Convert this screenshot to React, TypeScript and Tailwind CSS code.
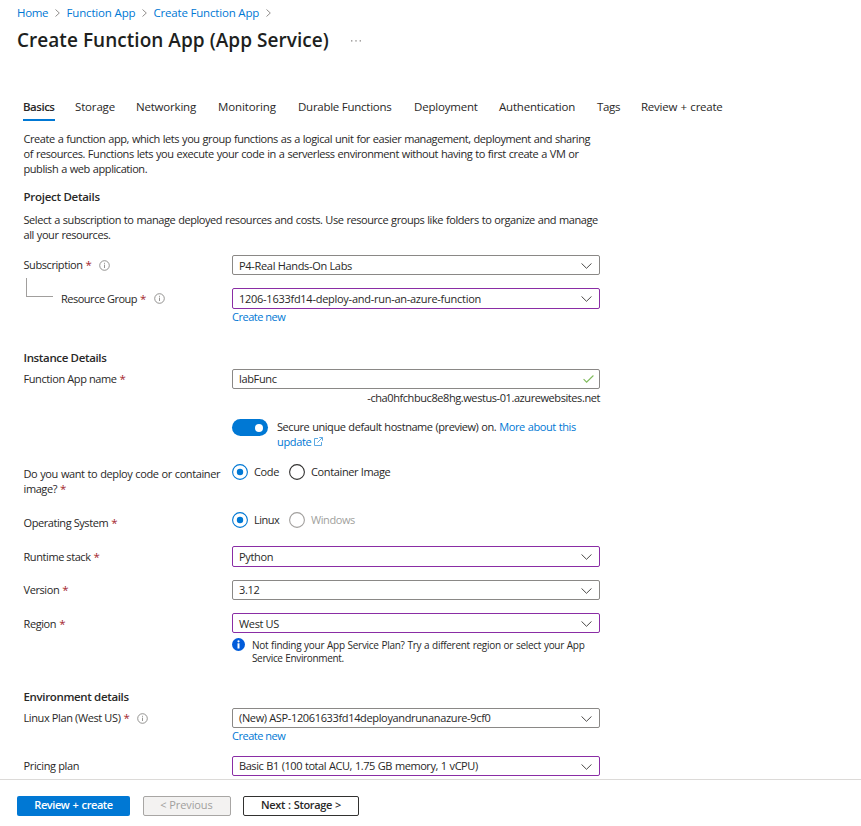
import type { ReactNode } from "react";

const BLUE = "text-[#0078d4]";

function Star() {
  return <span className="ml-[3px] text-[11.5px] text-[#a4262c]">*</span>;
}

function Info() {
  return (
    <svg className="ml-[7.5px] mt-[2px] size-[11px] shrink-0" viewBox="0 0 11 11" fill="none" stroke="#7a7876">
      <circle cx="5.5" cy="5.5" r="4.8" strokeWidth="0.8" />
      <path d="M5.5 4.6v3.4M5.5 2.8v1" strokeWidth="0.8" />
    </svg>
  );
}

function Chevron() {
  return (
    <svg className="mt-px h-[6px] w-[11px] shrink-0" viewBox="0 0 11 6" fill="none" stroke="#4a4846" strokeWidth="1">
      <path d="M0.5 0.4l5 4.9l5-4.9" />
    </svg>
  );
}

function Crumb() {
  return (
    <svg className="mt-px h-[8px] w-[5px] shrink-0" viewBox="0 0 5 8" fill="none" stroke="#85827f" strokeWidth="0.9">
      <path d="M0.5 0.5l3.8 3.5l-3.8 3.5" />
    </svg>
  );
}

function Select({ purple, tall, low, children }: { purple?: boolean; tall?: boolean; low?: boolean; children: ReactNode }) {
  return (
    <div
      className={`flex w-[368px] items-center justify-between rounded-[2px] border bg-white pr-[7px] pl-[6px] ${
        tall ? "h-[21px]" : "h-[20px]"
      } ${purple ? "border-[#8a2da5]" : "border-[#8a8886]"}`}
    >
      <span className={`leading-[15px] ${low ? "mt-px" : "-mt-px"}`}>{children}</span>
      <Chevron />
    </div>
  );
}

function Radio({ checked, disabled }: { checked?: boolean; disabled?: boolean }) {
  return (
    <svg className="size-[16px] shrink-0" viewBox="0 0 16 16" fill="none">
      <circle
        cx="8"
        cy="8"
        r="7.4"
        stroke={checked ? "#0078d4" : disabled ? "#a19f9d" : "#323130"}
        strokeWidth="1.1"
      />
      {checked && <circle cx="8" cy="8" r="3.2" fill="#0078d4" />}
    </svg>
  );
}

function Label({ children }: { children: ReactNode }) {
  return <div className="flex w-[208.5px] shrink-0">{children}</div>;
}

export default function App() {
  return (
    <div className="flex h-[826px] w-[861px] flex-col overflow-hidden bg-white font-['Open_Sans','Noto_Sans',sans-serif] text-[11px] leading-[15px] tracking-[-0.35px] whitespace-nowrap text-[#292827]">
      <nav className={`flex h-[25px] items-center pl-[17px] text-[11.5px] ${BLUE}`}>
        <span className="w-[38px] tracking-[-0.35px]">Home</span>
        <Crumb />
        <span className="ml-[6.5px] w-[75px] tracking-[-0.16px]">Function App</span>
        <Crumb />
        <span className="ml-[7px] w-[112px] tracking-[-0.19px]">Create Function App</span>
        <Crumb />
      </nav>
      <header className="flex h-[30px] items-center pl-[17px]">
        <h1 className="w-[334px] text-[19px] leading-[28px] font-semibold tracking-[0.04px] text-[#201f1e]">
          Create Function App (App Service)
        </h1>
        <svg className="mt-[2px] h-[2px] w-[10px]" viewBox="0 0 10 2" fill="#8a8886">
          <path d="M0 .2h1.4v1.4H0zM4.3 .2h1.4v1.4H4.3zM8.6 .2H10v1.4H8.6z" />
        </svg>
      </header>

      <div className="mt-[42px] flex h-[24px] pl-[23px] text-[11.5px] leading-[20px] tracking-[-0.2px]">
        <div className="mr-[20px] w-[32px] border-b-2 border-[#0078d4] font-semibold tracking-[-0.48px]">Basics</div>
        <div className="w-[61px] tracking-[-0.16px]">Storage</div>
        <div className="w-[82px]">Networking</div>
        <div className="w-[80px] tracking-[-0.13px]">Monitoring</div>
        <div className="w-[116px] tracking-[-0.26px]">Durable Functions</div>
        <div className="w-[85px]">Deployment</div>
        <div className="w-[98px]">Authentication</div>
        <div className="w-[44px] tracking-[-0.35px]">Tags</div>
        <div className="tracking-[-0.25px] [word-spacing:0.75px]">Review + create</div>
      </div>

      <main className="flex h-[658px] shrink-0 flex-col overflow-hidden pl-[23.5px]">
        <p className="mt-[10px] tracking-[-0.43px] [word-spacing:0.5px]">
          Create a function app, which lets you group functions as a logical unit for easier management, deployment and sharing
          <br />
          of resources. Functions lets you execute your code in a serverless environment without having to first create a VM or
          <br />
          publish a web application.
        </p>
        <h2 className="mt-[13px] h-[16px] text-[11.5px] leading-[16px] font-semibold tracking-[-0.28px]">Project Details</h2>
        <p className="mt-[7px] tracking-[-0.43px] [word-spacing:0.5px]">
          Select a subscription to manage deployed resources and costs. Use resource groups like folders to organize and manage
          <br />
          all your resources.
        </p>

        <div className="mt-[13px] flex h-[23px]">
          <Label>
            <span className="mt-[2px] tracking-[-0.42px]">Subscription</span>
            <span className="mt-[2px]"><Star /></span>
            <span className="mt-[3px]"><Info /></span>
          </Label>
          <Select low>
            <span className="tracking-[-0.315px]">P4-Real Hands-On Labs</span>
          </Select>
        </div>
        <div className="flex h-[41px]">
          <Label>
            <span className="ml-[2.5px] h-[19px] w-[27px] border-b border-l border-[#a19f9d]" />
            <span className="mt-[13px] ml-[8px] tracking-[-0.49px]">Resource Group</span>
            <span className="mt-[13px]"><Star /></span>
            <span className="mt-[13px]"><Info /></span>
          </Label>
          <div className="pt-[10px]">
            <Select purple tall>
              <span className="tracking-[-0.267px]">1206-1633fd14-deploy-and-run-an-azure-function</span>
            </Select>
            <div className={`tracking-[-0.48px] ${BLUE}`}>Create new</div>
          </div>
        </div>

        <h2 className="mt-[31px] h-[16px] text-[11.5px] leading-[16px] font-semibold tracking-[-0.35px]">Instance Details</h2>
        <div className="mt-[3px] flex h-[50px]">
          <Label>
            <span className="mt-[2px] tracking-[-0.4px]">Function App name<Star /></span>
          </Label>
          <div className="w-[368px]">
            <div className="flex h-[20px] items-center justify-between rounded-[2px] border border-[#8a8886] pr-[5px] pl-[6px]">
              <span className="-mt-px">labFunc</span>
              <svg className="mb-px h-[8px] w-[11px]" viewBox="0 0 11 8" fill="none" stroke="#7fba5a" strokeWidth="1.1">
                <path d="M0.6 4.2l3 3L10.4 0.5" />
              </svg>
            </div>
            <div className="mt-px text-right tracking-[-0.42px]">-cha0hfchbuc8e8hg.westus-01.azurewebsites.net</div>
          </div>
        </div>
        <div className="flex h-[45px]">
          <Label>{null}</Label>
          <div className="flex h-[17px] w-[36px] items-center justify-end rounded-full bg-[#0078d4] pr-[5px]">
            <span className="size-[8px] rounded-full bg-white" />
          </div>
          <div className="ml-[9px] tracking-[-0.44px] [word-spacing:0.5px]">
            Secure unique default hostname (preview) on. <span className={`tracking-[-0.41px] ${BLUE}`}>More about this</span>
            <br />
            <span className={`inline-flex tracking-[-0.35px] ${BLUE}`}>
              update
              <svg className="mt-[3px] ml-[3px] size-[9px]" viewBox="0 0 9 9" fill="none" stroke="#4a9fdf" strokeWidth="0.9">
                <path d="M4 1.5H.5v7h7V5M5.3 0.5h3.2v3.2M8.4 0.6L3.4 5.6" />
              </svg>
            </span>
          </div>
        </div>

        <div className="flex h-[48px]">
          <Label>
            <span className="mt-[2px] tracking-[-0.4px] [word-spacing:0.5px]">
              Do you want to deploy code or container
              <br />
              image?<Star />
            </span>
          </Label>
          <div className="flex h-[16px] items-center">
            <Radio checked />
            <span className="-mt-[2px] ml-[6px] w-[35px]">Code</span>
            <Radio />
            <span className="-mt-[2px] ml-[6px] tracking-[-0.37px]">Container Image</span>
          </div>
        </div>
        <div className="flex h-[34px]">
          <Label>
            <span className="mt-[3px] tracking-[-0.42px]">Operating System<Star /></span>
          </Label>
          <div className="flex h-[16px] items-center">
            <Radio checked />
            <span className="-mt-[2px] ml-[6px] w-[35px] tracking-[-0.5px]">Linux</span>
            <Radio disabled />
            <span className="-mt-[2px] ml-[6px] tracking-[-0.42px] text-[#a19f9d]">Windows</span>
          </div>
        </div>
        <div className="flex h-[34px]">
          <Label>
            <span className="mt-[3px] tracking-[-0.42px]">Runtime stack<Star /></span>
          </Label>
          <Select purple tall>Python</Select>
        </div>
        <div className="flex h-[33px]">
          <Label>
            <span className="mt-[2px] tracking-[-0.4px]">Version<Star /></span>
          </Label>
          <Select>3.12</Select>
        </div>
        <div className="flex h-[76px]">
          <Label>
            <span className="mt-[3px] tracking-[-0.4px]">Region<Star /></span>
          </Label>
          <div>
            <Select purple low>West US</Select>
            <div className="mt-[5px] flex">
              <svg className="size-[13px]" viewBox="0 0 13 13">
                <circle cx="6.5" cy="6.5" r="6.5" fill="#015cda" />
                <circle cx="6.5" cy="3.3" r="1.1" fill="#fff" />
                <path d="M5.5 5.3h2v5.2h-2z" fill="#fff" />
              </svg>
              <div className="mt-px ml-[7px] text-[10px] leading-[13px] tracking-[-0.285px] [word-spacing:0.5px]">
                Not finding your App Service Plan? Try a different region or select your App
                <br />
                <span className="tracking-[-0.36px]">Service Environment.</span>
              </div>
            </div>
          </div>
        </div>

        <h2 className="h-[16px] text-[11.5px] leading-[16px] font-semibold tracking-[-0.35px]">Environment details</h2>
        <div className="mt-[3px] flex h-[48px]">
          <Label>
            <span className="mt-[2px] tracking-[-0.38px]">Linux Plan (West US)<Star /></span>
            <span className="mt-[3px]"><Info /></span>
          </Label>
          <div>
            <Select>(New) ASP-12061633fd14deployandrunanazure-9cf0</Select>
            <div className={`tracking-[-0.48px] ${BLUE}`}>Create new</div>
          </div>
        </div>
        <div className="flex h-[20px]">
          <Label>
            <span className="mt-[2px]">Pricing plan</span>
          </Label>
          <Select purple>
            <span className="tracking-[-0.44px] [word-spacing:0.5px]">Basic B1 (100 total ACU, 1.75 GB memory, 1 vCPU)</span>
          </Select>
        </div>
      </main>

      <footer className="flex h-[47px] shrink-0 gap-x-[12.5px] border-t border-[#dcdad8] pt-[16px] pl-[17px] font-semibold">
        <button className="h-[20px] w-[113px] rounded-[2px] bg-[#0078d4] pb-[2px] leading-[16px] tracking-[-0.42px] [word-spacing:0.75px] text-white">
          Review + create
        </button>
        <button className="h-[20px] w-[88px] rounded-[2px] border border-[#a8a6a4] bg-[#f3f2f1] pb-[3px] font-normal leading-[15px] tracking-[-0.1px] text-[#a19f9d]">
          &lt; Previous
        </button>
        <button className="h-[20px] w-[116px] rounded-[2px] border border-[#323130] bg-white pb-[3px] leading-[15px] tracking-[-0.35px] [word-spacing:0.6px]">
          Next : Storage &gt;
        </button>
      </footer>
    </div>
  );
}
